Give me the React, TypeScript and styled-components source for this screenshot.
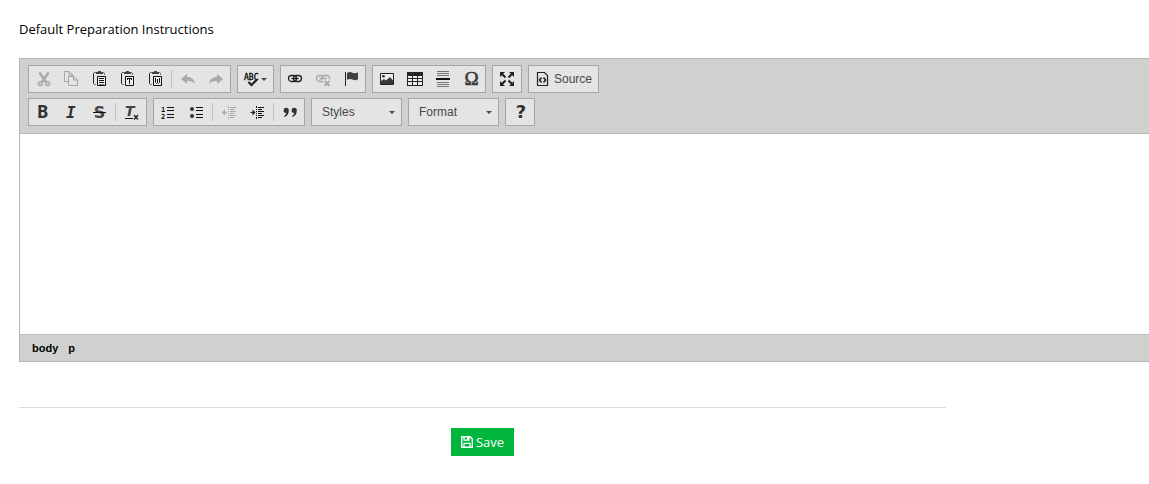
import React from 'react';
import styled, { createGlobalStyle } from 'styled-components';

const GlobalStyle = createGlobalStyle`
  * { box-sizing: border-box; }
  body { margin: 0; background: #fff; color: #000; overflow-x: hidden; font-family: 'Open Sans', sans-serif; font-size: 13px; }
`;

const Page = styled.main`padding: 20px 0 28px 19px;`;

const FieldLabel = styled.label`
  display: block;
  line-height: 18px;
  margin-bottom: 20px;
`;

const Editor = styled.section`
  border: 1px solid #b6b6b6;
  border-right: 0;
  font-family: 'Liberation Sans', Arial, sans-serif;
`;

const Toolbar = styled.div`
  display: flex;
  flex-direction: column;
  gap: 5px;
  padding: 6px 8px 7px;
  background: #cfd1cf;
  border-bottom: 1px solid #b6b6b6;
`;

const ToolRow = styled.div`
  display: flex;
  flex-wrap: wrap;
  gap: 6px;
`;

const ToolGroup = styled.div`
  display: flex;
  height: 28px;
  border: 1px solid #a6a6a6;
  background: #e4e4e4;
`;

const ToolButton = styled.button<{ $gap: number }>`
  display: flex;
  align-items: center;
  gap: ${(p) => p.$gap}px;
  padding: 0 6px;
  border: 0;
  background: transparent;
  color: #484848;
  font: 12px 'Liberation Sans', Arial, sans-serif;
  cursor: pointer;
  &:disabled { cursor: default; }
  &:disabled svg { opacity: 0.3; }
`;

const Separator = styled.span`
  width: 1px;
  height: 18px;
  margin: 4px 2px;
  background: #c0c0c0;
`;

const Glyph = styled.svg`
  display: block;
  flex: none;
  width: 16px;
  height: 16px;
  overflow: visible;
`;

const Caret = styled.span`
  width: 0;
  height: 0;
  border: 3px solid transparent;
  border-top-color: #484848;
  border-bottom: 0;
  pointer-events: none;
`;

const Combo = styled.label`
  display: grid;
  grid-template-columns: 1fr;
  align-items: center;
  width: 89px;
  > * { grid-area: 1 / 1; }
  ${Caret} { justify-self: end; margin-right: 6px; }
`;

const ComboSelect = styled.select`
  appearance: none;
  width: 100%;
  height: 26px;
  padding: 0 16px 0 10px;
  border: 0;
  border-radius: 0;
  background: transparent;
  color: #484848;
  font: 12px 'Liberation Sans', Arial, sans-serif;
`;

const EditArea = styled.textarea`
  display: block;
  width: 100%;
  height: 200px;
  padding: 20px;
  border: 0;
  outline: 0;
  resize: none;
  background: #fff;
`;

const PathBar = styled.nav`
  display: flex;
  align-items: center;
  gap: 10px;
  height: 27px;
  padding: 0 12px;
  background: #cfd1cf;
  border-top: 1px solid #bebebe;
`;

const PathLink = styled.a`
  color: #000;
  font-size: 11px;
  font-weight: bold;
  text-decoration: none;
`;

const Footer = styled.footer`
  display: flex;
  justify-content: center;
  margin: 45px 203px 0 0;
  padding-top: 20px;
  border-top: 1px solid #ddd;
`;

const SaveButton = styled.button`
  display: flex;
  align-items: center;
  gap: 3px;
  height: 28px;
  padding: 0 10px;
  border: 0;
  background: #00b63c;
  color: #fff;
  font: 13px 'Open Sans', sans-serif;
  cursor: pointer;
`;

const noto = "'Noto Sans', sans-serif";
const wide = "'DejaVu Sans', sans-serif";
const mono = "'DejaVu Sans Mono', monospace";

const clipboard = (
  <>
    <path d="M4.5 1.5H3.5L2.5 2.5V12.5L3.5 13.5H4.5M12.5 1.5L13.5 2.5V3.5" fill="none" stroke="#222" />
    <path d="M5 1h2V0h3v1h2v2H5z" fill="#444" />
    <path d="M6.5 5.5h8v9h-8z" fill="#fff" fillOpacity=".5" stroke="#111" />
  </>
);

const listLines = 'M8 3h7v1H8zM8 6h7v1H8zM8 10h7v1H8zM8 13h7v1H8z';
const indentLines =
  'M9 3h6v1H9zM9 5h4v1H9zM9 7h6v1H9zM9 9h4v1H9zM9 11h6v1H9zM9 13h4v1H9zM7 2h1v2H7zM7 5h1v1H7zM7 7h1v1H7zM7 9h1v1H7zM7 11h1v1H7zM7 13h1v2H7z';

const icons: Record<string, React.ReactNode> = {
  cut: (
    <g fill="none" stroke="#222">
      <path d="M4.400 1.500L11 11M13.600 1.500L7 11" strokeWidth="2.400" />
      <circle cx="5.300" cy="12.600" r="1.900" strokeWidth="1.500" />
      <circle cx="12.700" cy="12.600" r="1.900" strokeWidth="1.500" />
    </g>
  ),
  copy: (
    <path
      d="M5.5 10.5H1.5V.5H6L9.5 4V5M6 .5V4H9.5M5.5 5.5H10.5L14.5 9V14.5H5.5zM10.5 5.5V9H14.5"
      fill="none" stroke="#222"
    />
  ),
  paste: <>{clipboard}<path d="M8 7h5v1H8zM8 9h5v1H8zM8 11h5v1H8zM8 13h5v.5H8z" fill="#111" /></>,
  pasteText: <>{clipboard}<path d="M8 7h5v2h-1V8h-1v5h-1V8H9v1H8z" fill="#111" /></>,
  pasteWord: <>{clipboard}<path d="M8.5 7v4.500l1 1 1-1V8v3.500l1 1 1-1V7" fill="none" stroke="#111" /></>,
  undo: <path d="M1 8L7 3V6C11.5 6 14.5 8.5 15 13C12.8 10.5 10.5 10 7 10V13z" fill="#222" />,
  redo: <path d="M15 8L9 3V6C4.5 6 1.5 8.5 1 13C3.2 10.5 5.5 10 9 10V13z" fill="#222" />,
  spell: (
    <>
      <text x="0" y="9" fontFamily={mono} fontSize="8" fill="#000" stroke="#000" strokeWidth=".3">ABC</text>
      <path d="M4.5 11L7.5 14L13 8.5" fill="none" stroke="#222" strokeWidth="2.2" />
    </>
  ),
  link: (
    <>
      <rect x="1.5" y="4.500" width="8" height="6" rx="3" fill="none" stroke="#222" strokeWidth="1.300" />
      <rect x="6.500" y="4.500" width="8" height="6" rx="3" fill="none" stroke="#222" strokeWidth="1.300" />
      <path d="M4.5 7.5h7" stroke="#111" strokeWidth="1.2" />
    </>
  ),
  unlink: (
    <>
      <path d="M8 10.5H4.500a3 3 0 0 1 0-6h2a3 3 0 0 1 2.500 1.500M7 9a3 3 0 0 1 2.500-4.500h2a3 3 0 0 1 3 4M4.500 7.500h7" fill="none" stroke="#222" strokeWidth="1.300" />
      <path d="M9.500 10l5 5M14.500 10l-5 5" stroke="#222" strokeWidth="1.800" />
    </>
  ),
  flag: (
    <>
      <path d="M2 1h1v14H2z" fill="#222" />
      <path d="M4 2C6 .5 8 .7 9.5 1.7C11 2.5 13 2.5 15 1.3V8.3C13 9.5 11 9.3 9.5 8.5C8 7.7 6 7.7 4 8.7z" fill="#404040" />
    </>
  ),
  image: (
    <>
      <path d="M1.5 2.5h13v11h-13z" fill="#eee" stroke="#222" />
      <path d="M2 13V10l3-2 2 1.5L11 6l3 3.5V13z" fill="#3a3a3a" />
      <circle cx="4.5" cy="5.3" r="1.3" fill="#333" />
    </>
  ),
  table: (
    <>
      <path d="M0 1h16v14H0z" fill="#222" />
      <path d="M1 5h4v2H1zM6 5h4v2H6zM11 5h4v2h-4zM1 8h4v2H1zM6 8h4v2H6zM11 8h4v2h-4zM1 11h4v3H1zM6 11h4v3H6zM11 11h4v3h-4z" fill="#eee" />
    </>
  ),
  rule: (
    <>
      <path d="M2 0h12v1H2zM2 2h12v1H2zM2 4h12v1H2zM2 11h12v1H2zM2 13h12v1H2zM2 15h12v1H2z" fill="#777" />
      <path d="M1 7h14v2H1z" fill="#111" />
    </>
  ),
  omega: <text x="8.5" y="14" textAnchor="middle" fontFamily="'Liberation Serif', serif" fontSize="19" fill="#3a3a3a" stroke="#3a3a3a" strokeWidth=".6">Ω</text>,
  maximize: (
    <g fill="#222" stroke="#222">
      <path d="M3 3l3.5 3.5M13 3L9.5 6.5M3 13l3.5-3.5M13 13L9.5 9.5" strokeWidth="2" />
      <path d="M1 1h5L1 6zM15 1h-5l5 5zM1 15h5l-5-5zM15 15h-5l5-5z" stroke="none" />
    </g>
  ),
  source: (
    <>
      <path d="M2.5 1.5H9.5L12.5 4.5V14.5H2.5z" fill="none" stroke="#222" strokeWidth="1.2" />
      <path d="M6.5 6.5L4.5 9l2 2.5M8.5 6.500l2 2.500-2 2.500" fill="none" stroke="#222" strokeWidth="1.6" />
    </>
  ),
  bold: <text x="2" y="14" fontFamily={noto} fontSize="17" fontWeight="bold" fill="#333">B</text>,
  italic: <text x="3" y="14" fontFamily={mono} fontSize="16" fontWeight="bold" fontStyle="italic" fill="#333">I</text>,
  strike: (
    <>
      <text x="8.5" y="14" textAnchor="middle" fontFamily={wide} fontSize="16" fontWeight="bold" fill="#444">S</text>
      <path d="M2 8h13v1H2z" fill="#111" />
    </>
  ),
  clear: (
    <>
      <text x="1" y="12" fontFamily={wide} fontSize="14" fontWeight="bold" fontStyle="italic" fill="#444">T</text>
      <path d="M1 14h8v1H1z" fill="#111" />
      <path d="M10 11l4 4.5M14 11l-4 4.5" stroke="#222" strokeWidth="1.4" />
    </>
  ),
  numbered: (
    <>
      <text x="1" y="8" fontFamily={mono} fontSize="7" fontWeight="bold" fill="#111">1</text>
      <text x="1" y="15" fontFamily={mono} fontSize="7" fontWeight="bold" fill="#111">2</text>
      <path d={listLines} transform="translate(-1)" fill="#111" />
    </>
  ),
  bulleted: <><circle cx="4" cy="5" r="2" fill="#333" /><circle cx="4" cy="12" r="2" fill="#333" /><path d={listLines} fill="#111" /></>,
  outdent: <><path d={indentLines} fill="#222" /><path d="M1 8.500l3-3V8h2v1H4v2.500z" fill="#222" /></>,
  indent: <><path d={indentLines} fill="#111" /><path d="M6.500 8.500l-3-3V8h-2v1h2v2.500z" fill="#222" /></>,
  quote: (
    <g fill="#333">
      <path d="M6.800 6.500C6.800 10 5.200 12 2.500 13L2 12C3.500 11.200 4 10.200 4 9A2.600 2.600 0 1 1 6.800 6.500z" />
      <path d="M14.800 6.500C14.800 10 13.200 12 10.500 13L10 12C11.500 11.200 12 10.200 12 9A2.600 2.600 0 1 1 14.800 6.500z" />
    </g>
  ),
  help: <text x="9" y="14" textAnchor="middle" fontFamily={wide} fontSize="18" fontWeight="bold" fill="#333">?</text>,
};

const Icon = ({ name }: { name: string }) => (
  <Glyph viewBox="0 0 16 16" aria-hidden="true">{icons[name]}</Glyph>
);

type ToolProps = { icon: string; label: string; gap?: number; disabled?: boolean; children?: React.ReactNode };
const Tool = ({ icon, label, gap = 3, disabled, children }: ToolProps) => (
  <ToolButton type="button" aria-label={label} $gap={gap} disabled={disabled}>
    <Icon name={icon} />
    {children}
  </ToolButton>
);

const Dropdown = ({ label }: { label: string }) => (
  <ToolGroup>
    <Combo>
      <ComboSelect aria-label={label} defaultValue={label}>
        <option>{label}</option>
      </ComboSelect>
      <Caret />
    </Combo>
  </ToolGroup>
);

export default function App() {
  return (
    <>
      <GlobalStyle />
      <Page>
        <FieldLabel htmlFor="instructions">Default Preparation Instructions</FieldLabel>
        <Editor>
          <Toolbar role="toolbar" aria-label="Editor toolbar">
            <ToolRow>
              <ToolGroup>
                <Tool icon="cut" label="Cut" disabled />
                <Tool icon="copy" label="Copy" disabled />
                <Tool icon="paste" label="Paste" />
                <Tool icon="pasteText" label="Paste as plain text" />
                <Tool icon="pasteWord" label="Paste from Word" />
                <Separator />
                <Tool icon="undo" label="Undo" disabled />
                <Tool icon="redo" label="Redo" disabled />
              </ToolGroup>
              <ToolGroup>
                <Tool icon="spell" label="Spell check" gap={1}><Caret /></Tool>
              </ToolGroup>
              <ToolGroup>
                <Tool icon="link" label="Link" />
                <Tool icon="unlink" label="Unlink" disabled />
                <Tool icon="flag" label="Anchor" />
              </ToolGroup>
              <ToolGroup>
                <Tool icon="image" label="Image" />
                <Tool icon="table" label="Table" />
                <Tool icon="rule" label="Insert horizontal line" />
                <Tool icon="omega" label="Insert special character" />
              </ToolGroup>
              <ToolGroup>
                <Tool icon="maximize" label="Maximize" />
              </ToolGroup>
              <ToolGroup>
                <Tool icon="source" label="Source">Source</Tool>
              </ToolGroup>
            </ToolRow>
            <ToolRow>
              <ToolGroup>
                <Tool icon="bold" label="Bold" />
                <Tool icon="italic" label="Italic" />
                <Tool icon="strike" label="Strikethrough" />
                <Separator />
                <Tool icon="clear" label="Remove format" />
              </ToolGroup>
              <ToolGroup>
                <Tool icon="numbered" label="Numbered list" />
                <Tool icon="bulleted" label="Bulleted list" />
                <Separator />
                <Tool icon="outdent" label="Decrease indent" disabled />
                <Tool icon="indent" label="Increase indent" />
                <Separator />
                <Tool icon="quote" label="Block quote" />
              </ToolGroup>
              <Dropdown label="Styles" />
              <Dropdown label="Format" />
              <ToolGroup>
                <Tool icon="help" label="About the editor" />
              </ToolGroup>
            </ToolRow>
          </Toolbar>
          <EditArea id="instructions" />
          <PathBar aria-label="Element path">
            <PathLink href="#body">body</PathLink>
            <PathLink href="#p">p</PathLink>
          </PathBar>
        </Editor>
        <Footer>
          <SaveButton type="submit">
            <svg width="12" height="12" viewBox="0 0 12 12" fill="none" stroke="#fff" aria-hidden="true">
              <path d="M.7.7H9L11.3 3V11.3H.7z" strokeWidth="1.4" />
              <path d="M3 1v3.2h5V1M3 11V7.300h6V11" strokeWidth="1.2" />
              <path d="M6 1h2v3H6z" fill="#fff" stroke="none" />
            </svg>
            Save
          </SaveButton>
        </Footer>
      </Page>
    </>
  );
}
